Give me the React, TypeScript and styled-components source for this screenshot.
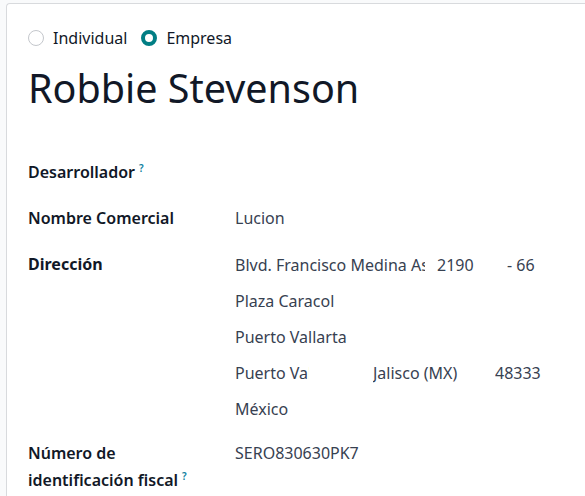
import styled, { createGlobalStyle } from "styled-components";

const GlobalStyle = createGlobalStyle`
  html, body {
    margin: 0;
    padding: 0;
    background: #f9fafb;
    font-family: "Noto Sans", "Open Sans", sans-serif;
    color: #111827;
  }
`;

const Page = styled.div`
  padding: 3px 0 0 6px;
  height: 496px;
  overflow: hidden;
  box-sizing: border-box;
`;

const Sheet = styled.div`
  background: #fff;
  border: 1px solid #d8dadd;
  border-right: none;
  border-bottom: none;
  border-radius: 4px 0 0 0;
  padding: 21px 0 0 21px;
  min-height: 600px;
`;

const RadioRow = styled.div`
  display: flex;
  align-items: center;
  gap: 14px;
  height: 26px;
`;

const RadioOption = styled.label`
  display: flex;
  align-items: center;
  gap: 9px;
  font-size: 16px;
  color: #111827;
`;

const RadioDot = styled.span<{ $checked?: boolean }>`
  width: 16px;
  height: 16px;
  box-sizing: border-box;
  border-radius: 50%;
  border: ${(p) => (p.$checked ? "4.5px solid #017e84" : "1px solid #c4c7cc")};
  background: #fff;
`;

const Name = styled.h1`
  margin: 10px 0 0;
  font-size: 39.5px;
  font-weight: 400;
  line-height: 54px;
  color: #111827;
`;

const Fields = styled.div`
  margin-top: 40px;
  display: grid;
  grid-template-columns: 207px 1fr;
  row-gap: 12px;
  font-size: 16px;
`;

const Label = styled.div<{ $bold?: boolean }>`
  font-weight: ${(p) => (p.$bold ? 700 : 600)};
  line-height: 27px;
  padding-top: 4px;
  min-height: 30px;
  color: #111827;
`;

const Help = styled.sup`
  color: #0e7fa0;
  font-size: 10px;
  font-weight: 600;
  line-height: 0;
  margin-left: 4px;
`;

const Value = styled.div`
  color: #374151;
  line-height: 34px;
  min-height: 34px;
`;

const Address = styled.div`
  display: flex;
  flex-direction: column;
  padding-top: 1px;
  margin-bottom: -4px;
  color: #374151;
`;

const AddrLine = styled.div`
  display: flex;
  height: 36px;
  line-height: 34px;
`;

const Cell = styled.span<{ $w: number }>`
  width: ${(p) => p.$w}px;
  flex: none;
  overflow: hidden;
  white-space: nowrap;
`;

function Radio({ label, checked }: { label: string; checked?: boolean }) {
  return (
    <RadioOption>
      <RadioDot $checked={checked} />
      {label}
    </RadioOption>
  );
}

export default function App() {
  return (
    <>
      <GlobalStyle />
      <Page>
        <Sheet>
          <RadioRow>
            <Radio label="Individual" />
            <Radio label="Empresa" checked />
          </RadioRow>
          <Name>Robbie Stevenson</Name>
          <Fields>
            <Label>
              Desarrollador<Help>?</Help>
            </Label>
            <Value />
            <Label>Nombre Comercial</Label>
            <Value>Lucion</Value>
            <Label $bold>Dirección</Label>
            <Address>
              <AddrLine>
                <Cell $w={190}>Blvd. Francisco Medina Ascencio</Cell>
                <Cell $w={12} />
                <Cell $w={70}>2190</Cell>
                <Cell $w={80}>- 66</Cell>
              </AddrLine>
              <AddrLine>Plaza Caracol</AddrLine>
              <AddrLine>Puerto Vallarta</AddrLine>
              <AddrLine>
                <Cell $w={74}>Puerto Vallarta</Cell>
                <Cell $w={64} />
                <Cell $w={122}>Jalisco (MX)</Cell>
                <Cell $w={80}>48333</Cell>
              </AddrLine>
              <AddrLine>México</AddrLine>
            </Address>
            <Label>
              Número de
              <br />
              identificación fiscal<Help>?</Help>
            </Label>
            <Value>SERO830630PK7</Value>
          </Fields>
        </Sheet>
      </Page>
    </>
  );
}
